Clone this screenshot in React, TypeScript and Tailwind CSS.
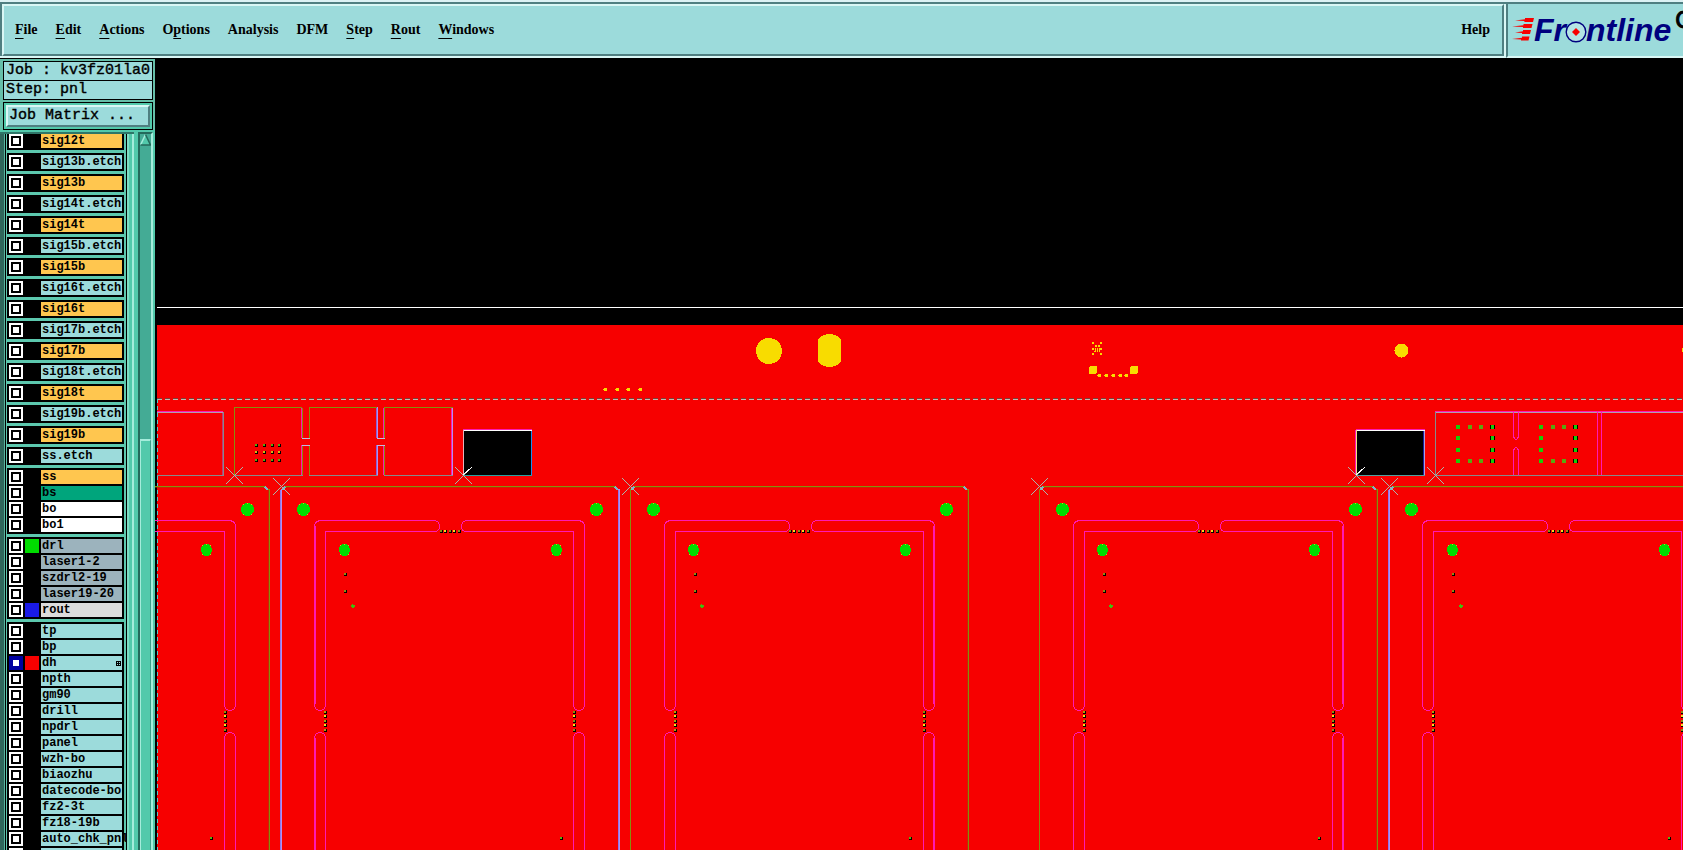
import React from "react";

type Row = { name: string; bg: string; swatch?: string; active?: boolean };

const CYAN = "bg-[#9cdbdb]";
const ORANGE = "bg-[#ffc64f]";
const GREY = "bg-[#9cb3bd]";

const signal = (name: string): Row[] => [{ name, bg: name.endsWith(".etch") ? CYAN : ORANGE }];

const groups: Row[][] = [
  ...[
    "sig12t", "sig13b.etch", "sig13b", "sig14t.etch", "sig14t", "sig15b.etch", "sig15b", "sig16t.etch",
    "sig16t", "sig17b.etch", "sig17b", "sig18t.etch", "sig18t", "sig19b.etch", "sig19b", "ss.etch",
  ].map(signal),
  [
    { name: "ss", bg: ORANGE },
    { name: "bs", bg: "bg-[#00a57c]" },
    { name: "bo", bg: "bg-white" },
    { name: "bo1", bg: "bg-white" },
  ],
  [
    { name: "drl", bg: GREY, swatch: "bg-[#00dd00]" },
    { name: "laser1-2", bg: GREY },
    { name: "szdrl2-19", bg: GREY },
    { name: "laser19-20", bg: GREY },
    { name: "rout", bg: "bg-[#dcdcdc]", swatch: "bg-[#1a1ae6]" },
  ],
  [
    { name: "tp", bg: CYAN },
    { name: "bp", bg: CYAN },
    { name: "dh", bg: CYAN, swatch: "bg-[#f70000]", active: true },
    ...["npth", "gm90", "drill", "npdrl", "panel", "wzh-bo", "biaozhu", "datecode-bo", "fz2-3t", "fz18-19b", "auto_chk_pnl", ""].map(
      (name) => ({ name, bg: CYAN }),
    ),
  ],
];

const menus: [string, number][] = [
  ["File", 0], ["Edit", 0], ["Actions", 0], ["Options", 1], ["Analysis", -1],
  ["DFM", -1], ["Step", 0], ["Rout", 0], ["Windows", 0],
];

function MenuButton({ text, mnemonic }: { text: string; mnemonic: number }) {
  return (
    <button type="button" className="whitespace-nowrap">
      {mnemonic < 0 ? text : (
        <>
          {text.slice(0, mnemonic)}
          <span className="underline decoration-1 underline-offset-4 [text-decoration-skip-ink:none]">{text[mnemonic]}</span>
          {text.slice(mnemonic + 1)}
        </>
      )}
    </button>
  );
}

function Header() {
  return (
    <header className="flex h-[58px] shrink-0 border-t-2 border-[#dcf2f4] bg-[#4f7f81] pt-[2px] font-['Liberation_Serif',serif] text-sm font-bold text-black">
      <div className="flex min-w-0 flex-1 border-b-2 border-r-2 border-[#d9f7f5] pl-[2px]">
        <nav className="flex min-w-0 flex-1 items-center gap-[18px] border-2 border-b-[#4f7f81] border-l-[#d9f7f5] border-r-[#4f7f81] border-t-[#d9f7f5] bg-[#9cdbdb] pl-[11px] pr-3">
          {menus.map(([text, m]) => <MenuButton key={text} text={text} mnemonic={m} />)}
          <span className="flex-1" />
          <MenuButton text="Help" mnemonic={-1} />
        </nav>
      </div>
      <div className="flex w-[177px] shrink-0 overflow-hidden border-b-2 border-l-2 border-b-[#d9f7f5] border-l-[#4f7f81] bg-[#9cdbdb]">
        <div className="flex items-center pb-px pl-1 font-['Liberation_Sans',sans-serif] text-[32px] italic leading-8 text-[#00007f]" aria-label="Frontline">
          <svg width="22" height="26" viewBox="0 0 22 26" fill="#f70000" aria-hidden="true">
            <path d="M3 3.4 L13 2.2 V1 L22 1 L21 5 H12.4 V4 Z" />
            <path d="M0 9.4 L11.5 8.2 V7 L20.5 7 L19.5 11 H11 V10 Z" />
            <path d="M3 15.4 L11 14.2 V13 L19 13 L18 17 H10 V16 Z" />
            <path d="M0 21.9 L10 20.7 V19.5 L17.5 19.5 L16.5 23.5 H9 V22.5 Z" />
          </svg>
          <span>Fr</span>
          <svg width="22" height="22" viewBox="0 0 22 22" className="-mx-px mt-1 shrink-0" aria-hidden="true">
            <circle cx="11" cy="11" r="9.8" fill="#b4e4e4" stroke="#00007f" strokeWidth="1.4" />
            <path d="M11 7 L15 11 L11 15 L7 11 Z" fill="#f70000" />
          </svg>
          <span>ntline</span>
        </div>
        <span className="pl-1 font-['Liberation_Sans',sans-serif] text-2xl font-normal [-webkit-text-stroke:1px_#000]">C</span>
      </div>
    </header>
  );
}

function LayerRow({ row, id }: { row: Row; id: string }) {
  return (
    <li className="flex h-[14px] gap-[2px]">
      <input
        id={id}
        type="checkbox"
        defaultChecked={row.active}
        aria-label={row.name || "layer"}
        className="size-[14px] shrink-0 appearance-none border-2 border-white bg-white shadow-[inset_0_0_0_2px_#000] checked:border-[#0000a0] checked:shadow-[inset_0_0_0_2px_#0000a0]"
      />
      <span className={`w-[14px] shrink-0 ${row.swatch ?? "bg-black"}`} />
      <label htmlFor={id} className={`flex min-w-0 flex-1 items-center justify-between whitespace-pre pl-px pr-px leading-[14px] ${row.bg}`}>
        {row.name}
        {row.active && (
          <svg width="5" height="5" viewBox="0 0 5 5" shapeRendering="crispEdges" className="shrink-0" aria-hidden="true">
            <path d="M.5 .5 H4.5 V4.5 H.5 Z M2.5 0 V5 M0 2.5 H5" fill="none" stroke="#000" />
          </svg>
        )}
      </label>
    </li>
  );
}

function Sidebar() {
  return (
    <aside className="flex w-[155px] shrink-0 flex-col overflow-hidden border-t border-black bg-[#52c9ab] font-['Liberation_Mono',monospace] font-bold text-black">
      <div className="flex flex-col bg-[#66bfa9] pl-[3px] pr-[2px] pt-[2px] text-[15px] leading-[18px]">
        <div className="h-5 overflow-hidden whitespace-pre border border-black bg-[#9cdbdb] pl-[2px] font-normal [-webkit-text-stroke:0.4px_#000]">Job : kv3fz01la0</div>
        <div className="-mt-px h-5 overflow-hidden whitespace-pre border border-black bg-[#9cdbdb] pl-[2px] font-normal [-webkit-text-stroke:0.4px_#000]">Step: pnl</div>
        <div className="mt-[2px] border border-black bg-[#52c9ab] p-[2px]">
          <button type="button" className="block h-[22px] w-full border-2 border-b-[#4f7f81] border-l-[#d9f7f5] border-r-[#4f7f81] border-t-[#d9f7f5] bg-[#9cdbdb] pl-px text-left font-normal leading-[18px] [-webkit-text-stroke:0.4px_#000]">
            Job Matrix ...
          </button>
        </div>
      </div>
      <div className="mt-[2px] flex min-h-0 flex-1">
        <div className="flex min-h-0 w-[134px] shrink-0 overflow-hidden border-t-2 border-[#2f7668]">
          <div className="w-[5px] border-r border-[#56b59f] bg-[#2f665b]" />
          <ul className="-mt-[2px] flex w-[122px] flex-col gap-[3px] border-x border-black bg-[#5cc8ae] pl-px pr-[2px] text-xs">
            {groups.map((rows, g) => (
              <li key={g}>
                <ul className="flex flex-col gap-[2px] bg-black p-[2px]">
                  {rows.map((row, r) => <LayerRow key={r} row={row} id={`layer-${g}-${r}`} />)}
                </ul>
              </li>
            ))}
          </ul>
          <div className="flex-1 border-l-2 border-r-2 border-l-[#7fdcc4] border-r-[#a5ecdb] bg-[#52c9ab]" />
        </div>
        <div className="ml-1 flex w-[15px] flex-col border-l-2 border-r-2 border-t-2 border-l-[#24695b] border-r-[#a5ecdb] border-t-[#24695b] bg-[#44ab95]">
          <svg width="11" height="12" viewBox="0 0 11 12" aria-hidden="true">
            <path d="M5.5 0.5 L0.5 11 H10.5 Z" fill="#52c9ab" />
            <path d="M5.5 0.5 L0.5 11" stroke="#a5ecdb" strokeWidth="1.5" />
            <path d="M5.5 0.5 L10.5 11 H0.5" fill="none" stroke="#24695b" strokeWidth="1.5" />
          </svg>
          <div className="h-[293px]" />
          <div className="flex-1 border-l border-r border-t-2 border-l-[#a5ecdb] border-r-[#3f9f8a] border-t-[#a5ecdb] bg-[#52c9ab]" />
        </div>
      </div>
    </aside>
  );
}

const MAGENTA = "#ff18b4";
const OLIVE = "#86900c";
const BROWN = "#a04408";
const LAVENDER = "#b490ee";
const GRAY = "#848c8c";

function Dot({ x, y, c = "#8c8c14" }: { x: number; y: number; c?: string }) {
  return (
    <>
      <rect x={x - 1} y={y - 1} width="3" height="3" fill="#000" />
      <rect x={x - 1} y={y - 1} width="2" height="2" fill={c} />
    </>
  );
}

function Cross({ x, y, over }: { x: number; y: number; over?: boolean }) {
  return (
    <g stroke="#a8b8ac" fill="none">
      <path d={`M${x - 8} ${y - 8} L${x + 9} ${y + 9} M${x - 8} ${y + 9} L${x + 9} ${y - 8}`} />
      {over && <path d={`M${x} ${y} L${x + 9} ${y - 8}`} stroke="#fff" />}
    </g>
  );
}

function Hole({ x, y, rx, ry, rim }: { x: number; y: number; rx: number; ry: number; rim?: boolean }) {
  return (
    <>
      {rim && <ellipse cx={x + 1} cy={y} rx={rx - 0.5} ry={ry - 2} fill="#000" />}
      <ellipse cx={x} cy={y} rx={rx} ry={ry} fill="#00dd00" />
      <path
        d={`M${x - 4.5} ${y - ry + 1}h1v1h-1z M${x + 3.5} ${y - ry + 1}h1v1h-1z M${x - 4.5} ${y + ry - 2}h1v1h-1z M${x + 3.5} ${y + ry - 2}h1v1h-1z M${x - 0.5} ${y - ry - 0.5}h1v1h-1z`}
        fill="#c8c818"
      />
    </>
  );
}

function Board({ x, shift = 0, left, right, rim }: { x: number; shift?: number; left?: boolean; right?: boolean; rim?: boolean }) {
  return (
    <g transform={`translate(${x} 0)`}>
      <g fill="none">
        <path d="M4 487.5 H334" stroke={BROWN} opacity="0.5" />
        <path d="M4 486.5 H334" stroke={OLIVE} />
        <path d="M.5 860 V490 L4 486.5" stroke={left ? LAVENDER : OLIVE} />
        {left && <path d="M-.5 860 V490" stroke="#8c78f0" />}
        <path d="M334 486.5 L338.5 490 V860" stroke={right ? LAVENDER : OLIVE} />
        <path d="M337.5 860 V490" stroke={right ? "#8c78f0" : BROWN} opacity={right ? 1 : 0.6} />
        <path d="M1 490 l3 -3 M334 487 l3 3" stroke="#7cb4c8" strokeWidth="2" />
      </g>
      <g transform={`translate(${shift} 0)`}>
        <g stroke={MAGENTA} fill="none">
          <path d="M44.5 531.5 H153 C157 531.5 158.5 529 158.5 526 C158.5 523 156 520.5 152 520.5 H41 C36 520.5 33.5 523 33.5 527 V704 C33.5 708 36 710.5 39 710.5 C42 710.5 44.5 708 44.5 704 Z" />
          <path d="M292.5 531.5 H185 C182 531.5 180.5 529 180.5 526 C180.5 523 183 520.5 186 520.5 H296 C301 520.5 303.5 523 303.5 527 V704 C303.5 708 301 710.5 298 710.5 C295 710.5 292.5 708 292.5 704 Z" />
          <path d="M33.5 860 V739 C33.5 735 36 732.5 39 732.5 C42 732.5 44.5 735 44.5 739 V860" />
          <path d="M292.5 860 V739 C292.5 735 295 732.5 298 732.5 C301 732.5 303.5 735 303.5 739 V860" />
          {rim && <path d="M302.5 526 V704 M302.5 738 V860" />}
          {right && <path d="M34.5 526 V704 M34.5 738 V860" />}
        </g>
        {[712, 716, 721, 725, 730].map((d, i) => (
          <g key={d}>
            <Dot x={44} y={d} c={i % 2 ? "#f0e020" : "#a8a010"} />
            <Dot x={293} y={d} c={i % 2 ? "#f0e020" : "#8c8c14"} />
          </g>
        ))}
        <Hole x={22.5} y={509.5} rx={6.5} ry={6.5} rim={rim} />
        <Hole x={315.5} y={509.5} rx={6.5} ry={6.5} rim={rim} />
      </g>
      {[160, 164, 169, 173, 178].map((d, i) => <Dot key={d} x={d} y={531} c={i % 2 ? "#f0e020" : "#8c8c14"} />)}
      <Hole x={63.5} y={550} rx={5.5} ry={6} rim={rim} />
      <Hole x={275.5} y={550} rx={5.5} ry={6} />
      <Dot x={64 + shift} y={574} />
      <Dot x={64 + shift} y={591} />
      <path d="M70 605h1v-1h1v1h2v2h-1v1h-2v-1h-1z" fill="#3cc010" />
      <Dot x={280} y={838} c="#58b010" />
    </g>
  );
}

function Pads({ xs }: { xs: number[] }) {
  const ys = [427, 438, 450, 461];
  return (
    <>
      {xs.flatMap((x, i) =>
        ys.map((y, j) =>
          i === 0 || i === 3 || j === 0 || j === 3 ? (
            <g key={`${x}-${y}`}>
              {i === 3 && <rect x={x - 2} y={y - 2} width="5" height="4" fill="#000" />}
              <rect x={x - (i === 3 ? 1 : 2)} y={y - 2} width={i === 3 ? 3 : 4} height="4" fill={i === 0 || i === 3 ? "#18cc08" : "#58a810"} />
            </g>
          ) : null,
        ),
      )}
    </>
  );
}

function Viewport() {
  return (
    <main className="min-w-0 flex-1 bg-black">
      <svg className="block size-full" viewBox="155 58 1528 792" preserveAspectRatio="xMinYMin slice" shapeRendering="crispEdges" role="img" aria-label="Panel layout">
        <rect x="157" y="307" width="1526" height="1" fill="#fff" />
        <rect x="157" y="325" width="1526" height="525" fill="#f70000" />

        <g fill="#f8dc00">
          <ellipse cx="769" cy="351" rx="13" ry="13" />
          <ellipse cx="829.5" cy="343" rx="12" ry="9" />
          <rect x="818" y="342" width="23" height="17" />
          <ellipse cx="829.5" cy="358" rx="12" ry="9" />
          <circle cx="1401.5" cy="350.5" r="7" />
          <circle cx="1688" cy="350" r="6" />
          {[605, 617, 628, 640].map((x) => <ellipse key={x} cx={x + 0.5} cy="389.5" rx="2" ry="1.5" />)}
          {[1099, 1106, 1113, 1120, 1126].map((x) => <ellipse key={x} cx={x + 0.5} cy="375.5" rx="2" ry="1.5" />)}
          <rect x="1089" y="366" width="8" height="8" rx="2" />
          <rect x="1130" y="366" width="8" height="8" rx="2" />
          <path d="M1092 342h2v2h-2z M1100 342h2v2h-2z M1095 345h2v2h-2z M1098 345h2v2h-2z M1092 348h2v2h-2z M1095 348h1v4h-1z M1097 348h1v4h-1z M1099 348h3v2h-3z M1094 351h1v1h-1z M1099 350h1v2h-1z M1092 353h2v2h-2z M1100 353h2v2h-2z" />
        </g>

        <g fill="none">
          <path d="M157 398.5 H1683" stroke="#7c4038" strokeDasharray="5 3" />
          <path d="M157 399.5 H1683" stroke="#c4b8b0" strokeDasharray="5 3" />
          <path d="M157.5 399 V860" stroke="#58c8c8" strokeDasharray="4 3" />

          <path d="M157 411.5 H223" stroke={MAGENTA} />
          <path d="M157 412.5 H223" stroke="#b0a0b0" />
          <path d="M223.5 412 V475.5 H157" stroke={GRAY} />
          <path d="M222.5 413 V475" stroke="#c43878" />

          <path d="M234.5 475 V407.5 H302 M309.5 438 V407.5 H377 M384.5 438 V407.5 H453" stroke={OLIVE} />
          <path d="M302.5 408 V438 M302.5 445 V475 M309.5 445 V475 M384.5 445 V475" stroke={OLIVE} />
          <path d="M301.5 408 V438 M301.5 445 V475 M451.5 408 V475 M383.5 408 V438 M383.5 445 V475" stroke={MAGENTA} />
          <path d="M377.5 407 V438 M377.5 445 V475 M452.5 408 V475" stroke={LAVENDER} />
          <path d="M376.5 408 V438 M376.5 445 V475" stroke="#8c60d8" />
          <path d="M302 438.5 H310 M302 445.5 H310 M377 438.5 H385 M377 445.5 H385" stroke="#c4b8dc" />
          <path d="M234 475.5 H303 M309 475.5 H378 M384 475.5 H453" stroke={GRAY} />
        </g>
        {[256, 264, 272, 279].flatMap((x) => [445, 452, 460].map((y) => <Dot key={`${x}-${y}`} x={x} y={y} c={y === 452 ? "#d0b818" : "#58a810"} />))}

        <rect x="463" y="430" width="69" height="46" fill="#000" />
        <g fill="none">
          <path d="M463 429.5 H532" stroke={MAGENTA} />
          <path d="M463 430.5 H532" stroke="#fff" />
          <path d="M463.5 430 V475" stroke="#e8b0b8" />
          <path d="M531.5 431 V475" stroke="#1890f0" />
          <path d="M463 475.5 H532" stroke="#28a0a0" />
        </g>

        <rect x="1356" y="430" width="69" height="46" fill="#000" />
        <g fill="none">
          <path d="M1356 429.5 H1425 M1355.5 430 V475" stroke={MAGENTA} />
          <path d="M1356 430.5 H1425" stroke="#fff" />
          <path d="M1356.5 430 V475" stroke="#f0e080" />
          <path d="M1423.5 431 V475" stroke="#1820a0" />
          <path d="M1424.5 431 V475" stroke="#b0a0d8" />
          <path d="M1356 475.5 H1425" stroke="#50a0a0" />

          <path d="M1435 411.5 H1683" stroke={MAGENTA} />
          <path d="M1435 412.5 H1683" stroke="#b0a0b0" />
          <path d="M1435.5 412 V475.5 H1683" stroke={GRAY} />
          <path d="M1513.5 412 V437 L1515.5 439.5 H1516.5 L1518.5 437 V412 M1513.5 475 V450 L1515.5 447.5 H1516.5 L1518.5 450 V475" stroke={MAGENTA} />
          <path d="M1597.5 412 V475 M1601.5 412 V475" stroke={MAGENTA} />
        </g>
        <Pads xs={[1458, 1470, 1481, 1492]} />
        <Pads xs={[1541, 1553, 1564, 1575]} />

        <Board x={-69} shift={1} />
        <Board x={281} left right />
        <Board x={630} shift={1} rim />
        <Board x={1039} shift={1} rim />
        <Board x={1389} left />

        <Cross x={234} y={475} />
        <Cross x={281} y={486} />
        <Cross x={463} y={475} over />
        <Cross x={630} y={486} />
        <Cross x={1039} y={486} />
        <Cross x={1356} y={475} over />
        <Cross x={1389} y={486} />
        <Cross x={1435} y={475} />
      </svg>
    </main>
  );
}

export default function App() {
  return (
    <div className="flex h-screen flex-col overflow-hidden bg-black">
      <Header />
      <div className="flex min-h-0 flex-1">
        <Sidebar />
        <Viewport />
      </div>
    </div>
  );
}
